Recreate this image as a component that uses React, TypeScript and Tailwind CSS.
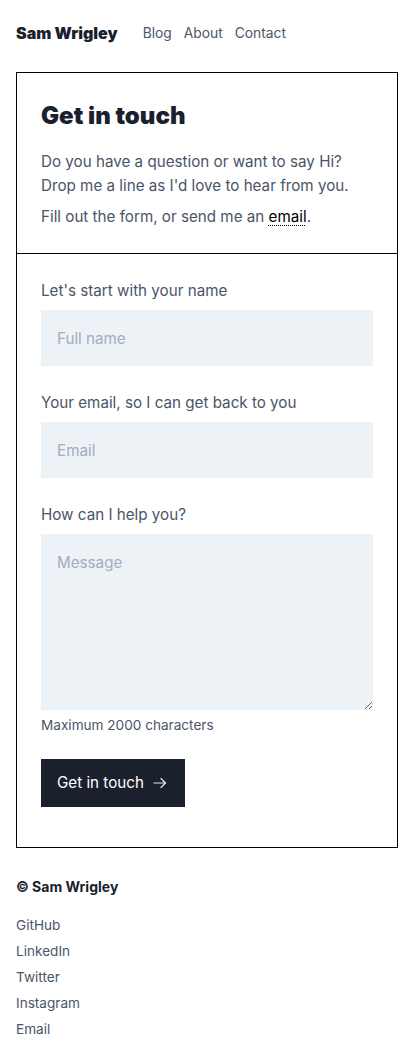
import React from "react";

export default function App() {
  return (
    <div className="min-h-[1060px] bg-white text-[#1a202c]" style={{ fontFamily: "Inter, 'Noto Sans', sans-serif" }}>
      <header className="flex items-center px-4 pt-[21px] pb-[27px]">
        <a className="text-base font-black leading-6 text-[#1a202c]">Sam Wrigley</a>
        <nav className="ml-[25px] flex gap-[12px] text-[13.8px] leading-6 text-[#4a5568]">
          <a>Blog</a>
          <a>About</a>
          <a>Contact</a>
        </nav>
      </header>

      <main className="mx-4 border border-black">
        <section className="px-6 pt-6 pb-[24px] border-b border-black">
          <h1 className="text-2xl leading-[38px] font-black text-[#1a202c] mb-[15px]">Get in touch</h1>
          <p className="text-[15.2px] leading-6 text-[#4a5568]">
            Do you have a question or want to say Hi? Drop me a line as I'd love to hear from you.
          </p>
          <p className="mt-[7px] text-[15.2px] leading-6 text-[#4a5568]">
            Fill out the form, or send me an{" "}
            <a className="text-black underline decoration-dotted decoration-1 underline-offset-[3px]">email</a>.
          </p>
        </section>

        <form className="px-6 pt-[25px] pb-10">
          <label className="block text-[15.2px] leading-6 text-[#4a5568]">Let's start with your name</label>
          <input
            className="mt-[7px] block w-full h-14 bg-[#edf2f7] px-4 text-[15.2px] text-[#1a202c] placeholder:text-[#a0aec0] outline-none"
            placeholder="Full name"
          />
          <label className="mt-[25px] block text-[15.2px] leading-6 text-[#4a5568]">Your email, so I can get back to you</label>
          <input
            className="mt-[7px] block w-full h-14 bg-[#edf2f7] px-4 text-[15.2px] text-[#1a202c] placeholder:text-[#a0aec0] outline-none"
            placeholder="Email"
          />
          <label className="mt-[25px] block text-[15.2px] leading-6 text-[#4a5568]">How can I help you?</label>
          <textarea
            className="mt-[7px] block w-full h-[176px] bg-[#edf2f7] px-4 pt-[17px] pb-4 text-[15.2px] leading-6 text-[#1a202c] placeholder:text-[#a0aec0] outline-none"
            placeholder="Message"
          />
          <p className="mt-[5px] text-[13.6px] leading-5 text-[#4a5568]">Maximum 2000 characters</p>
          <button
            type="button"
            className="mt-6 flex h-12 w-[144px] items-center gap-[9px] bg-[#1a202c] px-4 text-[15.2px] text-white"
          >
            Get in touch
            <svg width="14" height="14" viewBox="0 0 14 14" fill="none" stroke="#e2e8f0" strokeWidth="1.2" strokeLinecap="round" strokeLinejoin="round">
              <path d="M1 7h11.5M8 2.5 12.5 7 8 11.5" />
            </svg>
          </button>
        </form>
      </main>

      <footer className="px-4 pt-[29px] pb-4">
        <p className="text-sm leading-5 font-bold text-[#1a202c]">© Sam Wrigley</p>
        <ul className="mt-[18px] flex flex-col gap-[6px] text-[13.6px] leading-5 text-[#4a5568]">
          <li>GitHub</li>
          <li>LinkedIn</li>
          <li>Twitter</li>
          <li>Instagram</li>
          <li>Email</li>
        </ul>
      </footer>
    </div>
  );
}
